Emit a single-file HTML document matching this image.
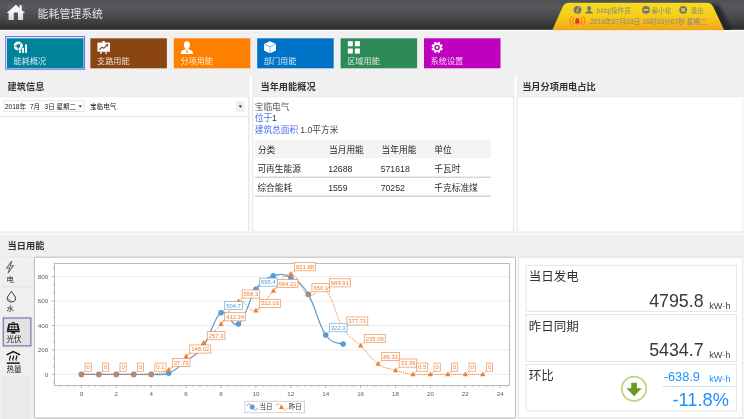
<!DOCTYPE html><html><head><meta charset="utf-8"><title>能耗管理系统</title><style>

html,body{margin:0;padding:0}
body{width:744px;height:419px;overflow:hidden;background:#f0f0f0;font-family:"Liberation Sans","Noto Sans CJK SC",sans-serif;position:relative}
#r{position:absolute;left:0;top:0;width:744px;height:419px;overflow:hidden}
#r div{position:absolute;box-sizing:border-box}
.l{position:absolute;white-space:pre}
.h{position:absolute;white-space:pre;color:transparent;line-height:1.2;pointer-events:none}
#ov{position:absolute;left:0;top:0;will-change:transform;font-family:"Liberation Sans","Noto Sans CJK SC",sans-serif}
.l{z-index:3;will-change:transform}

</style></head><body><div id="r">

<svg id="ov" width="744" height="419" viewBox="0 0 744 419">
<defs><linearGradient id="hg" x1="0" y1="0" x2="0" y2="1"><stop offset="0" stop-color="#505154"/><stop offset="0.22" stop-color="#57585b"/><stop offset="0.45" stop-color="#4e4f52"/><stop offset="0.7" stop-color="#404244"/><stop offset="0.94" stop-color="#2f3133"/><stop offset="1" stop-color="#2a2b2d"/></linearGradient></defs>
<rect x="0.00" y="0.00" width="744.00" height="29.90" fill="url(#hg)"/>
<rect x="0.00" y="29.90" width="744.00" height="1.50" fill="#fafafa"/>
<defs><linearGradient id="yg" x1="0" y1="0" x2="0" y2="1"><stop offset="0" stop-color="#f6dc1e"/><stop offset="0.45" stop-color="#f6cf1c"/><stop offset="1" stop-color="#f3a51a"/></linearGradient></defs>
<defs><filter id="bl" x="-20%" y="-20%" width="140%" height="140%"><feGaussianBlur stdDeviation="1.6"/></filter><clipPath id="hc"><rect x="0" y="0" width="744" height="29.9"/></clipPath></defs>
<g clip-path="url(#hc)"><path d="M552.2 30.2 L562.6 7 Q564.5 2.7 569 2.7 L706.5 2.7 Q711.5 2.7 713.3 7 L724.3 30.2 Z" transform="translate(8 1.5)" fill="#1f2022" opacity="0.8" filter="url(#bl)"/></g>
<path d="M552.2 30.2 L562.6 7 Q564.5 2.7 569 2.7 L706.5 2.7 Q711.5 2.7 713.3 7 L724.3 30.2 Z" fill="url(#yg)"/>
<defs><linearGradient id="hm" x1="0" y1="0" x2="0" y2="1"><stop offset="0" stop-color="#ffffff"/><stop offset="0.5" stop-color="#f4f4f4"/><stop offset="1" stop-color="#d4d4d4"/></linearGradient></defs>
<rect x="6.60" y="4.00" width="18.40" height="16.60" fill="#ffffff" opacity="0.045"/>
<path d="M15.9 4.7 L19.5 8.0 L19.5 5.3 L21.7 5.3 L21.7 10.0 L25.1 13.1 L23.1 13.1 L23.1 20 L18 20 L18 12.6 L13.8 12.6 L13.8 20 L8.6 20 L8.6 13.1 L6.7 13.1 Z" fill="url(#hm)"/>
<text x="37.60" y="18.04" font-size="10.9" fill="#e2e2e4">能耗管理系统</text>
<circle cx="577.5" cy="9.8" r="3.9" fill="#70737d"/><path d="M578 7.2 l0.9 0 l-0.3 1 l-0.9 0z M577.3 8.8 l1 0 l-0.9 3.6 l-1 0z" fill="#f6d81d"/>
<path d="M589.1 6 c1.3 0 1.9 1 1.9 2.2 c0 1.1 -0.5 2 -1.1 2.4 l0 0.6 c1.6 0.4 3.1 0.9 3.1 2.2 l-7.8 0 c0 -1.3 1.5 -1.8 3.1 -2.2 l0 -0.6 c-0.6 -0.4 -1.1 -1.3 -1.1 -2.4 c0 -1.2 0.6 -2.2 1.9 -2.2z" fill="#70737d"/>
<text x="596.80" y="12.91" font-size="6.6" fill="#87877f">bldq|操作员</text>
<circle cx="646" cy="9.8" r="3.9" fill="#70737d"/><rect x="643.6" y="9" width="4.8" height="1.7" fill="#f6d61d"/>
<text x="651.80" y="12.65" font-size="6.45" fill="#87877f">最小化</text>
<circle cx="683.2" cy="9.8" r="3.9" fill="#70737d"/><path d="M681.5 8.1 L684.9 11.5 M684.9 8.1 L681.5 11.5" stroke="#f6d61d" stroke-width="1.3" fill="none"/>
<text x="690.80" y="12.59" font-size="6.3" fill="#87877f">退出</text>
<g fill="none" stroke="#f2582a" stroke-width="0.65" stroke-linecap="round"><path d="M573.6 17.8 Q571.6 21.0 573.6 24.2"/><path d="M571.4 16.5 Q568.2 21.0 571.4 25.5"/><path d="M581.1 17.8 Q583.1 21.0 581.1 24.2"/><path d="M583.3 16.5 Q586.5 21.0 583.3 25.5"/></g>
<path d="M577.35 17.9 c1.3 0 1.8 1 1.9 2.2 l0.15 1.7 l0.6 0.9 l0 0.45 l-5.3 0 l0 -0.45 l0.6 -0.9 l0.15 -1.7 c0.1 -1.2 0.6 -2.2 1.9 -2.2z M576.5 23.5 l1.7 0 c0 0.55 -0.35 0.9 -0.85 0.9 c-0.5 0 -0.85 -0.35 -0.85 -0.9z" fill="#f0302a"/>
<text x="590.00" y="23.67" font-size="6.75" fill="#87877f">2018年07月03日 16时03分07秒 星期二</text>
<rect x="5.75" y="36.60" width="78.80" height="32.60" fill="#f2f2ff" stroke="#5a5aff" stroke-width="0.9"/>
<rect x="7.00" y="38.20" width="76.50" height="30.10" fill="#008299"/>
<rect x="7.00" y="38.20" width="76.50" height="0.80" fill="#ffffff" opacity="0.16"/>
<text x="13.60" y="63.50" font-size="8.17" fill="#ffffff" opacity="0.82">能耗概况</text>
<rect x="90.40" y="38.20" width="76.50" height="30.10" fill="#8b4513"/>
<rect x="90.40" y="38.20" width="76.50" height="0.80" fill="#ffffff" opacity="0.16"/>
<text x="97.00" y="63.50" font-size="8.17" fill="#ffffff" opacity="0.82">支路用能</text>
<rect x="173.80" y="38.20" width="76.50" height="30.10" fill="#ff8000"/>
<rect x="173.80" y="38.20" width="76.50" height="0.80" fill="#ffffff" opacity="0.16"/>
<text x="180.40" y="63.50" font-size="8.17" fill="#ffffff" opacity="0.82">分项用能</text>
<rect x="257.20" y="38.20" width="76.50" height="30.10" fill="#0072c6"/>
<rect x="257.20" y="38.20" width="76.50" height="0.80" fill="#ffffff" opacity="0.16"/>
<text x="263.80" y="63.50" font-size="8.17" fill="#ffffff" opacity="0.82">部门用能</text>
<rect x="340.60" y="38.20" width="76.50" height="30.10" fill="#2e8b57"/>
<rect x="340.60" y="38.20" width="76.50" height="0.80" fill="#ffffff" opacity="0.16"/>
<text x="347.20" y="63.50" font-size="8.17" fill="#ffffff" opacity="0.82">区域用能</text>
<rect x="424.00" y="38.20" width="76.50" height="30.10" fill="#bf00bf"/>
<rect x="424.00" y="38.20" width="76.50" height="0.80" fill="#ffffff" opacity="0.16"/>
<text x="430.60" y="63.50" font-size="8.17" fill="#ffffff" opacity="0.82">系统设置</text>
<circle cx="18.3" cy="46" r="3.3" fill="none" stroke="#ffffff" stroke-width="2.6"/><path d="M19.30 44.89 L21.78 42.14" stroke="#008299" stroke-width="0.75"/><path d="M16.80 46.05 L13.10 46.18" stroke="#008299" stroke-width="0.75"/><path d="M18.17 47.49 L17.85 51.18" stroke="#008299" stroke-width="0.75"/><rect x="19.0" y="50.4" width="1.9" height="2.5" fill="#ffffff" stroke="#008299" stroke-width="0.9" paint-order="stroke"/><rect x="22.1" y="47.9" width="1.9" height="5.0" fill="#ffffff" stroke="#008299" stroke-width="0.9" paint-order="stroke"/><rect x="25.1" y="44.4" width="1.9" height="8.5" fill="#ffffff" stroke="#008299" stroke-width="0.9" paint-order="stroke"/>
<g><rect x="97.4" y="42.6" width="12.6" height="9.1" rx="0.6" fill="#ffffff"/><rect x="102.3" y="41" width="2.6" height="2" rx="0.8" fill="#ffffff"/><path d="M101.6 51.5 L100.6 54 M105.5 51.5 L106.5 54" stroke="#ffffff" stroke-width="1.1"/><path d="M99.5 49.7 L102 47.1 L103.8 48.3 L107 45.2" stroke="#8b4513" stroke-width="1.1" fill="none"/><path d="M105.3 44.3 L108.2 44.1 L108 47 Z" fill="#8b4513"/></g>
<path d="M186.9 41.2 c2.1 0 3.1 1.5 3.1 3.6 c0 1.8 -0.9 3.5 -2 4.1 l0 0.4 c2.7 0.6 5 1.5 5 3.6 l0 1 l-12.2 0 l0 -1 c0 -2.1 2.3 -3 5 -3.6 l0 -0.4 c-1.1 -0.6 -2 -2.3 -2 -4.1 c0 -2.1 1 -3.6 3.1 -3.6z" fill="#ffffff"/><path d="M186.1 50.3 l1.6 0 l-0.3 2.6 l-1 0z" fill="#ff8000"/>
<path d="M270 41.2 L276 43.9 L276 50.6 L270 53.3 L264 50.6 L264 43.9 Z" fill="#ffffff"/><path d="M264.3 44.1 L270 46.7 L275.7 44.1 M270 46.7 L270 53" stroke="#4a9ad8" stroke-width="0.7" fill="none"/>
<rect x="347.8" y="41.2" width="5" height="5.1" fill="#ffffff"/>
<rect x="347.8" y="48.5" width="5" height="5.1" fill="#ffffff"/>
<rect x="354.9" y="41.2" width="5" height="5.1" fill="#ffffff"/>
<rect x="354.9" y="48.5" width="5" height="5.1" fill="#ffffff"/>
<path d="M442.73 48.56 L441.90 50.56 L440.15 50.14 L439.84 50.45 L440.26 52.20 L438.26 53.03 L437.32 51.49 L436.88 51.49 L435.94 53.03 L433.94 52.20 L434.36 50.45 L434.05 50.14 L432.30 50.56 L431.47 48.56 L433.01 47.62 L433.01 47.18 L431.47 46.24 L432.30 44.24 L434.05 44.66 L434.36 44.35 L433.94 42.60 L435.94 41.77 L436.88 43.31 L437.32 43.31 L438.26 41.77 L440.26 42.60 L439.84 44.35 L440.15 44.66 L441.90 44.24 L442.73 46.24 L441.19 47.18 L441.19 47.62 Z" fill="#ffffff"/><circle cx="437.1" cy="47.4" r="2.0" fill="none" stroke="#bf00bf" stroke-width="1.5"/>
<text x="7.60" y="90.00" font-size="9.2" font-weight="bold" fill="#333333">建筑信息</text>
<text x="260.50" y="89.90" font-size="9.2" font-weight="bold" fill="#333333">当年用能概况</text>
<text x="522.20" y="90.00" font-size="9.2" font-weight="bold" fill="#333333">当月分项用电占比</text>
<text x="7.60" y="248.80" font-size="9.2" font-weight="bold" fill="#333333">当日用能</text>
<rect x="-1.00" y="96.90" width="249.30" height="134.90" fill="#fff" stroke="#e6e6e6" stroke-width="0.6"/>
<rect x="0.00" y="116.00" width="248.50" height="0.90" fill="#e6e6e6"/>
<rect x="252.80" y="96.90" width="260.40" height="134.90" fill="#fff" stroke="#e6e6e6" stroke-width="0.6"/>
<rect x="517.60" y="96.90" width="225.30" height="134.90" fill="#fff" stroke="#e4e4e4" stroke-width="0.6"/>
<rect x="743.30" y="96.60" width="1.00" height="136.00" fill="#fafafa"/>
<rect x="248.50" y="96.60" width="4.10" height="135.40" fill="#e6e6e6"/>
<rect x="249.40" y="76.00" width="2.60" height="156.60" fill="#fdfdfd"/>
<rect x="513.40" y="96.60" width="4.00" height="135.40" fill="#e6e6e6"/>
<rect x="514.20" y="76.00" width="2.70" height="156.60" fill="#fdfdfd"/>
<rect x="0.00" y="232.00" width="744.00" height="0.70" fill="#e4e4e4"/>
<rect x="0.00" y="232.70" width="744.00" height="2.40" fill="#fbfbfb"/>
<rect x="3.90" y="100.70" width="80.10" height="10.70" fill="#fff" stroke="#dde1ec" stroke-width="0.8"/>
<text x="4.90" y="109.24" font-size="6.54" fill="#222222">2018年</text>
<text x="29.90" y="109.24" font-size="6.54" fill="#222222">7月</text>
<text x="44.50" y="109.24" font-size="6.54" fill="#222222">3日</text>
<text x="56.40" y="109.24" font-size="6.54" fill="#222222">星期二</text>
<path d="M78.5 105.4 L82.1 105.4 L80.3 107.6 Z" fill="#222"/>
<text x="90.00" y="109.26" font-size="6.6" fill="#222222">宝临电气</text>
<rect x="236.20" y="101.20" width="8.60" height="10.70" fill="#efefef"/>
<path d="M238.7 105.6 L242.1 105.6 L240.4 107.7 Z" fill="#222"/>
<text x="254.70" y="109.81" font-size="8.71" fill="#5a5a5a">宝临电气</text>
<text x="254.70" y="121.31" font-size="8.71" fill="#4a6cf0">位于</text>
<text x="272.12" y="121.31" font-size="8.71" fill="#333">1</text>
<text x="254.70" y="133.11" font-size="8.71" fill="#4a6cf0">建筑总面积</text>
<text x="300.20" y="133.11" font-size="8.71" fill="#444">1.0平方米</text>
<rect x="254.70" y="139.70" width="236.40" height="18.30" fill="#f4f4f4"/>
<rect x="254.70" y="176.70" width="236.40" height="1.00" fill="#c2c2c2"/>
<rect x="254.70" y="195.70" width="236.40" height="1.00" fill="#c2c2c2"/>
<text x="257.90" y="152.81" font-size="8.71" fill="#2b2b2b">分类</text>
<text x="329.00" y="152.81" font-size="8.71" fill="#2b2b2b">当月用能</text>
<text x="381.60" y="152.81" font-size="8.71" fill="#2b2b2b">当年用能</text>
<text x="434.30" y="152.81" font-size="8.71" fill="#2b2b2b">单位</text>
<text x="257.40" y="171.71" font-size="8.71" fill="#2b2b2b">可再生能源</text>
<text x="257.40" y="190.71" font-size="8.71" fill="#2b2b2b">综合能耗</text>
<text x="434.30" y="171.71" font-size="8.71" fill="#2b2b2b">千瓦时</text>
<text x="434.30" y="190.71" font-size="8.71" fill="#2b2b2b">千克标准煤</text>
<text x="328.20" y="171.71" font-size="8.71" fill="#2b2b2b">12688</text>
<text x="380.70" y="171.71" font-size="8.71" fill="#2b2b2b">571618</text>
<text x="328.20" y="190.71" font-size="8.71" fill="#2b2b2b">1559</text>
<text x="380.70" y="190.71" font-size="8.71" fill="#2b2b2b">70252</text>
<rect x="2.30" y="256.00" width="28.90" height="163.00" fill="#eaeaea"/>
<rect x="3.70" y="258.60" width="26.60" height="26.30" fill="#efefef" stroke="#f4f4f4" stroke-width="0.8"/>
<rect x="3.70" y="288.60" width="26.60" height="26.30" fill="#efefef" stroke="#f4f4f4" stroke-width="0.8"/>
<rect x="2.40" y="317.20" width="29.30" height="29.50" fill="#c8c8c8"/>
<rect x="3.30" y="318.10" width="27.50" height="27.70" fill="#e2e2e2" stroke="#6a6ab6" stroke-width="0.9"/>
<rect x="3.70" y="349.00" width="26.60" height="25.90" fill="#efefef" stroke="#f4f4f4" stroke-width="0.8"/>
<text x="6.50" y="281.61" font-size="7.4" fill="#1a1a1a">电</text>
<text x="6.50" y="311.41" font-size="7.4" fill="#1a1a1a">水</text>
<text x="6.50" y="341.89" font-size="7.6" fill="#1a1a1a">光伏</text>
<text x="6.50" y="371.69" font-size="7.6" fill="#1a1a1a">热量</text>
<path d="M11.6 261.2 L6.6 268.2 L10 267.6 L8.2 272.8 L13.6 265.6 L10.2 266.2 Z" fill="none" stroke="#333" stroke-width="0.8" stroke-linejoin="round"/>
<path d="M11.4 291.4 C9.6 294.2 7.2 296.2 7.2 298.6 C7.2 300.6 9 302 11.4 302 C13.8 302 15.6 300.6 15.6 298.6 C15.6 296.2 13.2 294.2 11.4 291.4 Z" fill="none" stroke="#222" stroke-width="0.9"/><path d="M8.6 298.8 C8.8 300 9.8 300.8 11 300.9" fill="none" stroke="#222" stroke-width="0.6"/>
<g fill="#111"><path d="M11.6 322.6 Q13.3 321.2 15 322.6 L15 323.6 L14.2 323.6 L14.2 323 Q13.3 322.3 12.4 323 L12.4 323.6 L11.6 323.6 Z"/><path d="M8.6 323.6 L18 323.6 L19.8 330.4 L6.8 330.4 Z"/><rect x="6.8" y="330.9" width="13" height="1.2"/><path d="M11.8 332.1 L14.8 332.1 L15.6 333.6 L11 333.6 Z"/></g><g fill="#e2e2e2"><rect x="9.6" y="325" width="2.1" height="1.6"/><rect x="12.3" y="325" width="2.1" height="1.6"/><rect x="15" y="325" width="2.1" height="1.6"/><rect x="9.2" y="327.4" width="2.3" height="1.7"/><rect x="12.2" y="327.4" width="2.3" height="1.7"/><rect x="15.2" y="327.4" width="2.3" height="1.7"/></g>
<g fill="none" stroke="#111"><path d="M6.6 354.8 L13.3 351.5 L20 354.8" stroke-width="1.5" stroke-linejoin="miter"/><path d="M10 355.6 q1.1 1.2 0 2.4 q-1.1 1.2 0 2.6 M13.2 355.6 q1.1 1.2 0 2.4 q-1.1 1.2 0 2.6 M16.4 355.6 q1.1 1.2 0 2.4 q-1.1 1.2 0 2.6" stroke-width="1.15"/><path d="M6.8 363.1 L19.8 363.1" stroke-width="1.5"/></g>
<rect x="34.40" y="257.20" width="481.20" height="160.80" fill="#fff" stroke="#b2b2b2" stroke-width="0.9" rx="1.2"/>
<path d="M54.4 374.40 L509.4 374.40" stroke="#e4e4e4" stroke-width="0.7"/><path d="M54.4 349.96 L509.4 349.96" stroke="#e4e4e4" stroke-width="0.7"/><path d="M54.4 325.52 L509.4 325.52" stroke="#e4e4e4" stroke-width="0.7"/><path d="M54.4 301.08 L509.4 301.08" stroke="#e4e4e4" stroke-width="0.7"/><path d="M54.4 276.64 L509.4 276.64" stroke="#e4e4e4" stroke-width="0.7"/><rect x="54.4" y="263.4" width="455.0" height="122.0" fill="none" stroke="#a8a8a8" stroke-width="0.8"/><path d="M53.1 382.55 L54.4 382.55 M51.7 374.40 L54.4 374.40 M53.1 366.25 L54.4 366.25 M53.1 358.11 L54.4 358.11 M51.7 349.96 L54.4 349.96 M53.1 341.81 L54.4 341.81 M53.1 333.67 L54.4 333.67 M51.7 325.52 L54.4 325.52 M53.1 317.37 L54.4 317.37 M53.1 309.23 L54.4 309.23 M51.7 301.08 L54.4 301.08 M53.1 292.93 L54.4 292.93 M53.1 284.79 L54.4 284.79 M51.7 276.64 L54.4 276.64 M53.1 268.49 L54.4 268.49 M60.46 385.4 L60.46 386.7 M67.44 385.4 L67.44 386.7 M74.42 385.4 L74.42 386.7 M81.40 385.4 L81.40 388.1 M88.38 385.4 L88.38 386.7 M95.36 385.4 L95.36 386.7 M102.34 385.4 L102.34 386.7 M109.32 385.4 L109.32 386.7 M116.30 385.4 L116.30 388.1 M123.28 385.4 L123.28 386.7 M130.26 385.4 L130.26 386.7 M137.24 385.4 L137.24 386.7 M144.22 385.4 L144.22 386.7 M151.20 385.4 L151.20 388.1 M158.18 385.4 L158.18 386.7 M165.16 385.4 L165.16 386.7 M172.14 385.4 L172.14 386.7 M179.12 385.4 L179.12 386.7 M186.10 385.4 L186.10 388.1 M193.08 385.4 L193.08 386.7 M200.06 385.4 L200.06 386.7 M207.04 385.4 L207.04 386.7 M214.02 385.4 L214.02 386.7 M221.00 385.4 L221.00 388.1 M227.98 385.4 L227.98 386.7 M234.96 385.4 L234.96 386.7 M241.94 385.4 L241.94 386.7 M248.92 385.4 L248.92 386.7 M255.90 385.4 L255.90 388.1 M262.88 385.4 L262.88 386.7 M269.86 385.4 L269.86 386.7 M276.84 385.4 L276.84 386.7 M283.82 385.4 L283.82 386.7 M290.80 385.4 L290.80 388.1 M297.78 385.4 L297.78 386.7 M304.76 385.4 L304.76 386.7 M311.74 385.4 L311.74 386.7 M318.72 385.4 L318.72 386.7 M325.70 385.4 L325.70 388.1 M332.68 385.4 L332.68 386.7 M339.66 385.4 L339.66 386.7 M346.64 385.4 L346.64 386.7 M353.62 385.4 L353.62 386.7 M360.60 385.4 L360.60 388.1 M367.58 385.4 L367.58 386.7 M374.56 385.4 L374.56 386.7 M381.54 385.4 L381.54 386.7 M388.52 385.4 L388.52 386.7 M395.50 385.4 L395.50 388.1 M402.48 385.4 L402.48 386.7 M409.46 385.4 L409.46 386.7 M416.44 385.4 L416.44 386.7 M423.42 385.4 L423.42 386.7 M430.40 385.4 L430.40 388.1 M437.38 385.4 L437.38 386.7 M444.36 385.4 L444.36 386.7 M451.34 385.4 L451.34 386.7 M458.32 385.4 L458.32 386.7 M465.30 385.4 L465.30 388.1 M472.28 385.4 L472.28 386.7 M479.26 385.4 L479.26 386.7 M486.24 385.4 L486.24 386.7 M493.22 385.4 L493.22 386.7 M500.20 385.4 L500.20 388.1 M507.18 385.4 L507.18 386.7" stroke="#9c9c9c" stroke-width="0.75" fill="none"/>
<text x="48.20" y="376.60" font-size="6.20" fill="#5c5c5c" text-anchor="end">0</text>
<text x="48.20" y="352.16" font-size="6.20" fill="#5c5c5c" text-anchor="end">200</text>
<text x="48.20" y="327.72" font-size="6.20" fill="#5c5c5c" text-anchor="end">400</text>
<text x="48.20" y="303.28" font-size="6.20" fill="#5c5c5c" text-anchor="end">600</text>
<text x="48.20" y="278.84" font-size="6.20" fill="#5c5c5c" text-anchor="end">800</text>
<text x="81.40" y="396.20" font-size="6.20" fill="#5c5c5c" text-anchor="middle">0</text>
<text x="116.30" y="396.20" font-size="6.20" fill="#5c5c5c" text-anchor="middle">2</text>
<text x="151.20" y="396.20" font-size="6.20" fill="#5c5c5c" text-anchor="middle">4</text>
<text x="186.10" y="396.20" font-size="6.20" fill="#5c5c5c" text-anchor="middle">6</text>
<text x="221.00" y="396.20" font-size="6.20" fill="#5c5c5c" text-anchor="middle">8</text>
<text x="255.90" y="396.20" font-size="6.20" fill="#5c5c5c" text-anchor="middle">10</text>
<text x="290.80" y="396.20" font-size="6.20" fill="#5c5c5c" text-anchor="middle">12</text>
<text x="325.70" y="396.20" font-size="6.20" fill="#5c5c5c" text-anchor="middle">14</text>
<text x="360.60" y="396.20" font-size="6.20" fill="#5c5c5c" text-anchor="middle">16</text>
<text x="395.50" y="396.20" font-size="6.20" fill="#5c5c5c" text-anchor="middle">18</text>
<text x="430.40" y="396.20" font-size="6.20" fill="#5c5c5c" text-anchor="middle">20</text>
<text x="465.30" y="396.20" font-size="6.20" fill="#5c5c5c" text-anchor="middle">22</text>
<text x="500.20" y="396.20" font-size="6.20" fill="#5c5c5c" text-anchor="middle">24</text>
<path d="M81.40 374.40 C85.01 374.40 91.64 374.40 98.85 374.40 C106.06 374.40 109.09 374.40 116.30 374.40 C123.51 374.40 126.54 374.40 133.75 374.40 C140.96 374.40 143.99 374.65 151.20 374.40 C158.41 374.15 161.44 375.91 168.65 373.18 C175.86 370.45 178.89 366.81 186.10 361.20 C193.31 355.60 196.34 356.07 203.55 346.05 C210.76 336.03 213.79 317.30 221.00 312.73 C228.21 308.15 231.24 328.75 238.45 323.93 C245.66 319.12 248.69 299.35 255.90 289.42 C263.11 279.50 266.14 278.35 273.35 275.91 C280.56 273.47 283.59 273.80 290.80 277.62 C298.01 281.43 301.04 282.50 308.25 294.36 C315.46 306.22 318.49 324.74 325.70 335.01 C332.91 345.29 339.54 342.22 343.15 344.09" fill="none" stroke="#5b9bd5" stroke-width="1.25" stroke-linecap="round"/><circle cx="81.40" cy="374.40" r="2.8" fill="#5b9bd5"/><circle cx="98.85" cy="374.40" r="2.8" fill="#5b9bd5"/><circle cx="116.30" cy="374.40" r="2.8" fill="#5b9bd5"/><circle cx="133.75" cy="374.40" r="2.8" fill="#5b9bd5"/><circle cx="151.20" cy="374.40" r="2.8" fill="#5b9bd5"/><circle cx="168.65" cy="373.18" r="2.8" fill="#5b9bd5"/><circle cx="186.10" cy="361.20" r="2.8" fill="#5b9bd5"/><circle cx="203.55" cy="346.05" r="2.8" fill="#5b9bd5"/><circle cx="221.00" cy="312.73" r="2.8" fill="#5b9bd5"/><circle cx="238.45" cy="323.93" r="2.8" fill="#5b9bd5"/><circle cx="255.90" cy="289.42" r="2.8" fill="#5b9bd5"/><circle cx="273.35" cy="275.91" r="2.8" fill="#5b9bd5"/><circle cx="290.80" cy="277.62" r="2.8" fill="#5b9bd5"/><circle cx="308.25" cy="294.36" r="2.8" fill="#5b9bd5"/><circle cx="325.70" cy="335.01" r="2.8" fill="#5b9bd5"/><circle cx="343.15" cy="344.09" r="2.8" fill="#5b9bd5"/><path d="M81.40 374.40 C84.89 374.40 91.87 374.40 98.85 374.40 C105.83 374.40 109.32 374.40 116.30 374.40 C123.28 374.40 126.77 374.40 133.75 374.40 C140.73 374.40 144.22 375.31 151.20 374.39 C158.18 373.47 161.67 373.40 168.65 369.79 C175.63 366.17 179.12 361.68 186.10 356.31 C193.08 350.95 196.57 349.42 203.55 342.96 C210.53 336.50 214.02 332.35 221.00 324.01 C227.98 315.68 231.47 303.97 238.45 301.29 C245.43 298.61 248.92 312.71 255.90 310.61 C262.88 308.51 266.37 298.12 273.35 290.79 C280.33 283.46 283.82 273.13 290.80 273.97 C297.78 274.80 301.27 291.73 308.25 294.96 C315.23 298.18 318.72 283.44 325.70 290.09 C332.68 296.75 336.17 317.13 343.15 328.24 C350.13 339.36 353.62 338.55 360.60 345.67 C367.58 352.79 371.07 358.92 378.05 363.85 C385.03 368.78 388.52 368.22 395.50 370.32 C402.48 372.42 405.97 373.52 412.95 374.34 C419.93 375.15 423.42 374.39 430.40 374.40 C437.38 374.41 440.87 374.40 447.85 374.40 C454.83 374.40 458.32 374.40 465.30 374.40 C472.28 374.40 479.26 374.40 482.75 374.40" fill="none" stroke="#ed7d31" stroke-width="1.0" stroke-dasharray="1.1 1.0"/><path d="M81.40 371.50 l2.6 4.8 l-5.2 0z" fill="#ed7d31"/><path d="M98.85 371.50 l2.6 4.8 l-5.2 0z" fill="#ed7d31"/><path d="M116.30 371.50 l2.6 4.8 l-5.2 0z" fill="#ed7d31"/><path d="M133.75 371.50 l2.6 4.8 l-5.2 0z" fill="#ed7d31"/><path d="M151.20 371.49 l2.6 4.8 l-5.2 0z" fill="#ed7d31"/><path d="M168.65 366.89 l2.6 4.8 l-5.2 0z" fill="#ed7d31"/><path d="M186.10 353.41 l2.6 4.8 l-5.2 0z" fill="#ed7d31"/><path d="M203.55 340.06 l2.6 4.8 l-5.2 0z" fill="#ed7d31"/><path d="M221.00 321.11 l2.6 4.8 l-5.2 0z" fill="#ed7d31"/><path d="M238.45 298.39 l2.6 4.8 l-5.2 0z" fill="#ed7d31"/><path d="M255.90 307.71 l2.6 4.8 l-5.2 0z" fill="#ed7d31"/><path d="M273.35 287.89 l2.6 4.8 l-5.2 0z" fill="#ed7d31"/><path d="M290.80 271.07 l2.6 4.8 l-5.2 0z" fill="#ed7d31"/><path d="M308.25 292.06 l2.6 4.8 l-5.2 0z" fill="#ed7d31"/><path d="M325.70 287.19 l2.6 4.8 l-5.2 0z" fill="#ed7d31"/><path d="M343.15 325.34 l2.6 4.8 l-5.2 0z" fill="#ed7d31"/><path d="M360.60 342.77 l2.6 4.8 l-5.2 0z" fill="#ed7d31"/><path d="M378.05 360.95 l2.6 4.8 l-5.2 0z" fill="#ed7d31"/><path d="M395.50 367.42 l2.6 4.8 l-5.2 0z" fill="#ed7d31"/><path d="M412.95 371.44 l2.6 4.8 l-5.2 0z" fill="#ed7d31"/><path d="M430.40 371.50 l2.6 4.8 l-5.2 0z" fill="#ed7d31"/><path d="M447.85 371.50 l2.6 4.8 l-5.2 0z" fill="#ed7d31"/><path d="M465.30 371.50 l2.6 4.8 l-5.2 0z" fill="#ed7d31"/><path d="M482.75 371.50 l2.6 4.8 l-5.2 0z" fill="#ed7d31"/>
<path d="M82.40 373.40 L85.10 371.20" stroke="#ed7d31" stroke-width="0.6"/><rect x="85.10" y="363.10" width="6.18" height="8.1" fill="#fff" stroke="#ed7d31" stroke-width="0.7" stroke-opacity="0.85"/>
<text x="88.19" y="369.27" font-size="5.90" fill="#ed7d31" text-anchor="middle">0</text>
<path d="M99.85 373.40 L102.55 371.20" stroke="#ed7d31" stroke-width="0.6"/><rect x="102.55" y="363.10" width="6.18" height="8.1" fill="#fff" stroke="#ed7d31" stroke-width="0.7" stroke-opacity="0.85"/>
<text x="105.64" y="369.27" font-size="5.90" fill="#ed7d31" text-anchor="middle">0</text>
<path d="M117.30 373.40 L120.00 371.20" stroke="#ed7d31" stroke-width="0.6"/><rect x="120.00" y="363.10" width="6.18" height="8.1" fill="#fff" stroke="#ed7d31" stroke-width="0.7" stroke-opacity="0.85"/>
<text x="123.09" y="369.27" font-size="5.90" fill="#ed7d31" text-anchor="middle">0</text>
<path d="M134.75 373.40 L137.45 371.20" stroke="#ed7d31" stroke-width="0.6"/><rect x="137.45" y="363.10" width="6.18" height="8.1" fill="#fff" stroke="#ed7d31" stroke-width="0.7" stroke-opacity="0.85"/>
<text x="140.54" y="369.27" font-size="5.90" fill="#ed7d31" text-anchor="middle">0</text>
<path d="M152.20 373.39 L154.90 371.19" stroke="#ed7d31" stroke-width="0.6"/><rect x="154.90" y="363.09" width="11.10" height="8.1" fill="#fff" stroke="#ed7d31" stroke-width="0.7" stroke-opacity="0.85"/>
<text x="160.45" y="369.26" font-size="5.90" fill="#ed7d31" text-anchor="middle">0.1</text>
<path d="M169.65 368.79 L172.35 366.59" stroke="#ed7d31" stroke-width="0.6"/><rect x="172.35" y="358.49" width="17.66" height="8.1" fill="#fff" stroke="#ed7d31" stroke-width="0.7" stroke-opacity="0.85"/>
<text x="181.18" y="364.66" font-size="5.90" fill="#ed7d31" text-anchor="middle">37.73</text>
<path d="M187.10 355.31 L189.80 353.11" stroke="#ed7d31" stroke-width="0.6"/><rect x="189.80" y="345.01" width="20.94" height="8.1" fill="#fff" stroke="#ed7d31" stroke-width="0.7" stroke-opacity="0.85"/>
<text x="200.27" y="351.18" font-size="5.90" fill="#ed7d31" text-anchor="middle">148.02</text>
<path d="M204.55 341.96 L207.25 339.76" stroke="#ed7d31" stroke-width="0.6"/><rect x="207.25" y="331.66" width="17.66" height="8.1" fill="#fff" stroke="#ed7d31" stroke-width="0.7" stroke-opacity="0.85"/>
<text x="216.08" y="337.83" font-size="5.90" fill="#ed7d31" text-anchor="middle">257.3</text>
<path d="M222.00 323.01 L224.70 320.81" stroke="#ed7d31" stroke-width="0.6"/><rect x="224.70" y="312.71" width="20.94" height="8.1" fill="#fff" stroke="#ed7d31" stroke-width="0.7" stroke-opacity="0.85"/>
<text x="235.17" y="318.88" font-size="5.90" fill="#ed7d31" text-anchor="middle">412.34</text>
<path d="M239.45 300.29 L242.15 298.09" stroke="#ed7d31" stroke-width="0.6"/><rect x="242.15" y="289.99" width="17.66" height="8.1" fill="#fff" stroke="#ed7d31" stroke-width="0.7" stroke-opacity="0.85"/>
<text x="250.98" y="296.16" font-size="5.90" fill="#ed7d31" text-anchor="middle">598.3</text>
<path d="M256.90 309.61 L259.60 307.41" stroke="#ed7d31" stroke-width="0.6"/><rect x="259.60" y="299.31" width="20.94" height="8.1" fill="#fff" stroke="#ed7d31" stroke-width="0.7" stroke-opacity="0.85"/>
<text x="270.07" y="305.48" font-size="5.90" fill="#ed7d31" text-anchor="middle">522.03</text>
<path d="M274.35 289.79 L277.05 287.59" stroke="#ed7d31" stroke-width="0.6"/><rect x="277.05" y="279.49" width="20.94" height="8.1" fill="#fff" stroke="#ed7d31" stroke-width="0.7" stroke-opacity="0.85"/>
<text x="287.52" y="285.66" font-size="5.90" fill="#ed7d31" text-anchor="middle">684.21</text>
<path d="M291.80 272.97 L294.50 270.77" stroke="#ed7d31" stroke-width="0.6"/><rect x="294.50" y="262.67" width="20.94" height="8.1" fill="#fff" stroke="#ed7d31" stroke-width="0.7" stroke-opacity="0.85"/>
<text x="304.97" y="268.84" font-size="5.90" fill="#ed7d31" text-anchor="middle">821.88</text>
<path d="M309.25 293.96 L311.95 291.76" stroke="#ed7d31" stroke-width="0.6"/><rect x="311.95" y="283.66" width="17.66" height="8.1" fill="#fff" stroke="#ed7d31" stroke-width="0.7" stroke-opacity="0.85"/>
<text x="320.78" y="289.83" font-size="5.90" fill="#ed7d31" text-anchor="middle">650.1</text>
<path d="M326.70 289.09 L329.40 286.89" stroke="#ed7d31" stroke-width="0.6"/><rect x="329.40" y="278.79" width="20.94" height="8.1" fill="#fff" stroke="#ed7d31" stroke-width="0.7" stroke-opacity="0.85"/>
<text x="339.87" y="284.96" font-size="5.90" fill="#ed7d31" text-anchor="middle">689.91</text>
<path d="M344.15 327.24 L346.85 325.04" stroke="#ed7d31" stroke-width="0.6"/><rect x="346.85" y="316.94" width="20.94" height="8.1" fill="#fff" stroke="#ed7d31" stroke-width="0.7" stroke-opacity="0.85"/>
<text x="357.32" y="323.11" font-size="5.90" fill="#ed7d31" text-anchor="middle">377.71</text>
<path d="M361.60 344.67 L364.30 342.47" stroke="#ed7d31" stroke-width="0.6"/><rect x="364.30" y="334.37" width="20.94" height="8.1" fill="#fff" stroke="#ed7d31" stroke-width="0.7" stroke-opacity="0.85"/>
<text x="374.77" y="340.54" font-size="5.90" fill="#ed7d31" text-anchor="middle">235.09</text>
<path d="M379.05 362.85 L381.75 360.65" stroke="#ed7d31" stroke-width="0.6"/><rect x="381.75" y="352.55" width="17.66" height="8.1" fill="#fff" stroke="#ed7d31" stroke-width="0.7" stroke-opacity="0.85"/>
<text x="390.58" y="358.72" font-size="5.90" fill="#ed7d31" text-anchor="middle">86.31</text>
<path d="M396.50 369.32 L399.20 367.12" stroke="#ed7d31" stroke-width="0.6"/><rect x="399.20" y="359.02" width="17.66" height="8.1" fill="#fff" stroke="#ed7d31" stroke-width="0.7" stroke-opacity="0.85"/>
<text x="408.03" y="365.19" font-size="5.90" fill="#ed7d31" text-anchor="middle">33.39</text>
<path d="M413.95 373.34 L416.65 371.14" stroke="#ed7d31" stroke-width="0.6"/><rect x="416.65" y="363.04" width="11.10" height="8.1" fill="#fff" stroke="#ed7d31" stroke-width="0.7" stroke-opacity="0.85"/>
<text x="422.20" y="369.21" font-size="5.90" fill="#ed7d31" text-anchor="middle">0.5</text>
<path d="M431.40 373.40 L434.10 371.20" stroke="#ed7d31" stroke-width="0.6"/><rect x="434.10" y="363.10" width="6.18" height="8.1" fill="#fff" stroke="#ed7d31" stroke-width="0.7" stroke-opacity="0.85"/>
<text x="437.19" y="369.27" font-size="5.90" fill="#ed7d31" text-anchor="middle">0</text>
<path d="M448.85 373.40 L451.55 371.20" stroke="#ed7d31" stroke-width="0.6"/><rect x="451.55" y="363.10" width="6.18" height="8.1" fill="#fff" stroke="#ed7d31" stroke-width="0.7" stroke-opacity="0.85"/>
<text x="454.64" y="369.27" font-size="5.90" fill="#ed7d31" text-anchor="middle">0</text>
<path d="M466.30 373.40 L469.00 371.20" stroke="#ed7d31" stroke-width="0.6"/><rect x="469.00" y="363.10" width="6.18" height="8.1" fill="#fff" stroke="#ed7d31" stroke-width="0.7" stroke-opacity="0.85"/>
<text x="472.09" y="369.27" font-size="5.90" fill="#ed7d31" text-anchor="middle">0</text>
<path d="M483.75 373.40 L486.45 371.20" stroke="#ed7d31" stroke-width="0.6"/><rect x="486.45" y="363.10" width="6.18" height="8.1" fill="#fff" stroke="#ed7d31" stroke-width="0.7" stroke-opacity="0.85"/>
<text x="489.54" y="369.27" font-size="5.90" fill="#ed7d31" text-anchor="middle">0</text>
<path d="M222.00 311.73 L224.70 309.53" stroke="#5b9bd5" stroke-width="0.6"/><rect x="224.70" y="301.43" width="17.66" height="8.1" fill="#fff" stroke="#5b9bd5" stroke-width="0.7" stroke-opacity="0.85"/>
<text x="233.53" y="307.60" font-size="5.90" fill="#5b9bd5" text-anchor="middle">504.7</text>
<path d="M256.90 288.42 L259.60 286.22" stroke="#5b9bd5" stroke-width="0.6"/><rect x="259.60" y="278.12" width="17.66" height="8.1" fill="#fff" stroke="#5b9bd5" stroke-width="0.7" stroke-opacity="0.85"/>
<text x="268.43" y="284.29" font-size="5.90" fill="#5b9bd5" text-anchor="middle">695.4</text>
<path d="M326.70 334.01 L329.40 331.81" stroke="#5b9bd5" stroke-width="0.6"/><rect x="329.40" y="323.71" width="17.66" height="8.1" fill="#fff" stroke="#5b9bd5" stroke-width="0.7" stroke-opacity="0.85"/>
<text x="338.23" y="329.88" font-size="5.90" fill="#5b9bd5" text-anchor="middle">322.3</text>
<rect x="244.75" y="401.25" width="59.85" height="11.50" fill="#fff" stroke="#c8c8c8" stroke-width="0.8"/>
<path d="M246.9 405.9 C247.4 403.1 250.5 403.1 252.25 406.9 C254 410.7 257.1 410.7 257.7 408.1" fill="none" stroke="#5b9bd5" stroke-width="0.9"/><circle cx="252.25" cy="406.9" r="2.5" fill="#5b9bd5"/>
<path d="M276.2 405.9 C276.7 403.1 279.8 403.1 281.55 406.9 C283.3 410.7 286.4 410.7 287 408.1" fill="none" stroke="#ed7d31" stroke-width="0.9" stroke-dasharray="1.1 0.7"/><path d="M281.5 404.4 l2.5 4.6 l-5 0z" fill="#ed7d31"/>
<text x="259.60" y="409.47" font-size="6.5" fill="#333">当日</text>
<text x="288.70" y="409.47" font-size="6.5" fill="#333">昨日</text>
<rect x="518.40" y="257.20" width="224.40" height="160.60" fill="#fff" stroke="#dedede" stroke-width="0.8"/>
<rect x="743.30" y="256.00" width="1.00" height="163.00" fill="#fafafa"/>
<rect x="516.20" y="256.50" width="1.80" height="162.50" fill="#fafafa"/>
<rect x="526.10" y="265.30" width="210.30" height="46.00" fill="#fff" stroke="#dfdfdf" stroke-width="0.8"/>
<rect x="526.10" y="314.40" width="210.30" height="46.90" fill="#fff" stroke="#dfdfdf" stroke-width="0.8"/>
<rect x="526.10" y="364.40" width="210.30" height="46.60" fill="#fff" stroke="#dfdfdf" stroke-width="0.8"/>
<text x="528.80" y="281.45" font-size="12.5" fill="#333333">当日发电</text>
<text x="528.80" y="330.65" font-size="12.5" fill="#333333">昨日同期</text>
<text x="528.80" y="380.05" font-size="12.5" fill="#333333">环比</text>
<text x="649.16" y="306.60" font-size="17.8" fill="#383838">4795.8</text>
<text x="649.16" y="356.40" font-size="17.8" fill="#383838">5434.7</text>
<text x="709.20" y="308.50" font-size="9.2" fill="#444">kW·h</text>
<text x="709.20" y="358.30" font-size="9.2" fill="#444">kW·h</text>
<text x="663.73" y="381.10" font-size="12.75" fill="#1e90ff">-638.9</text>
<text x="709.20" y="381.60" font-size="9.2" fill="#1e90ff">kW·h</text>
<path d="M663.2 386.5 L735.4 386.5" stroke="#7fbfff" stroke-width="0.7" stroke-dasharray="1.4 0.8"/>
<text x="672.56" y="406.30" font-size="18.2" fill="#1e90ff">-11.8%</text>
<circle cx="634" cy="388.8" r="12.2" fill="#fff" stroke="#b7d67d" stroke-width="1.7"/><path d="M631.3 382.7 L636.9 382.7 L636.9 388.3 L641.7 388.3 L634.1 396.2 L626.5 388.3 L631.3 388.3 Z" fill="#6c9a1f"/>
</svg>
</div></body></html>
